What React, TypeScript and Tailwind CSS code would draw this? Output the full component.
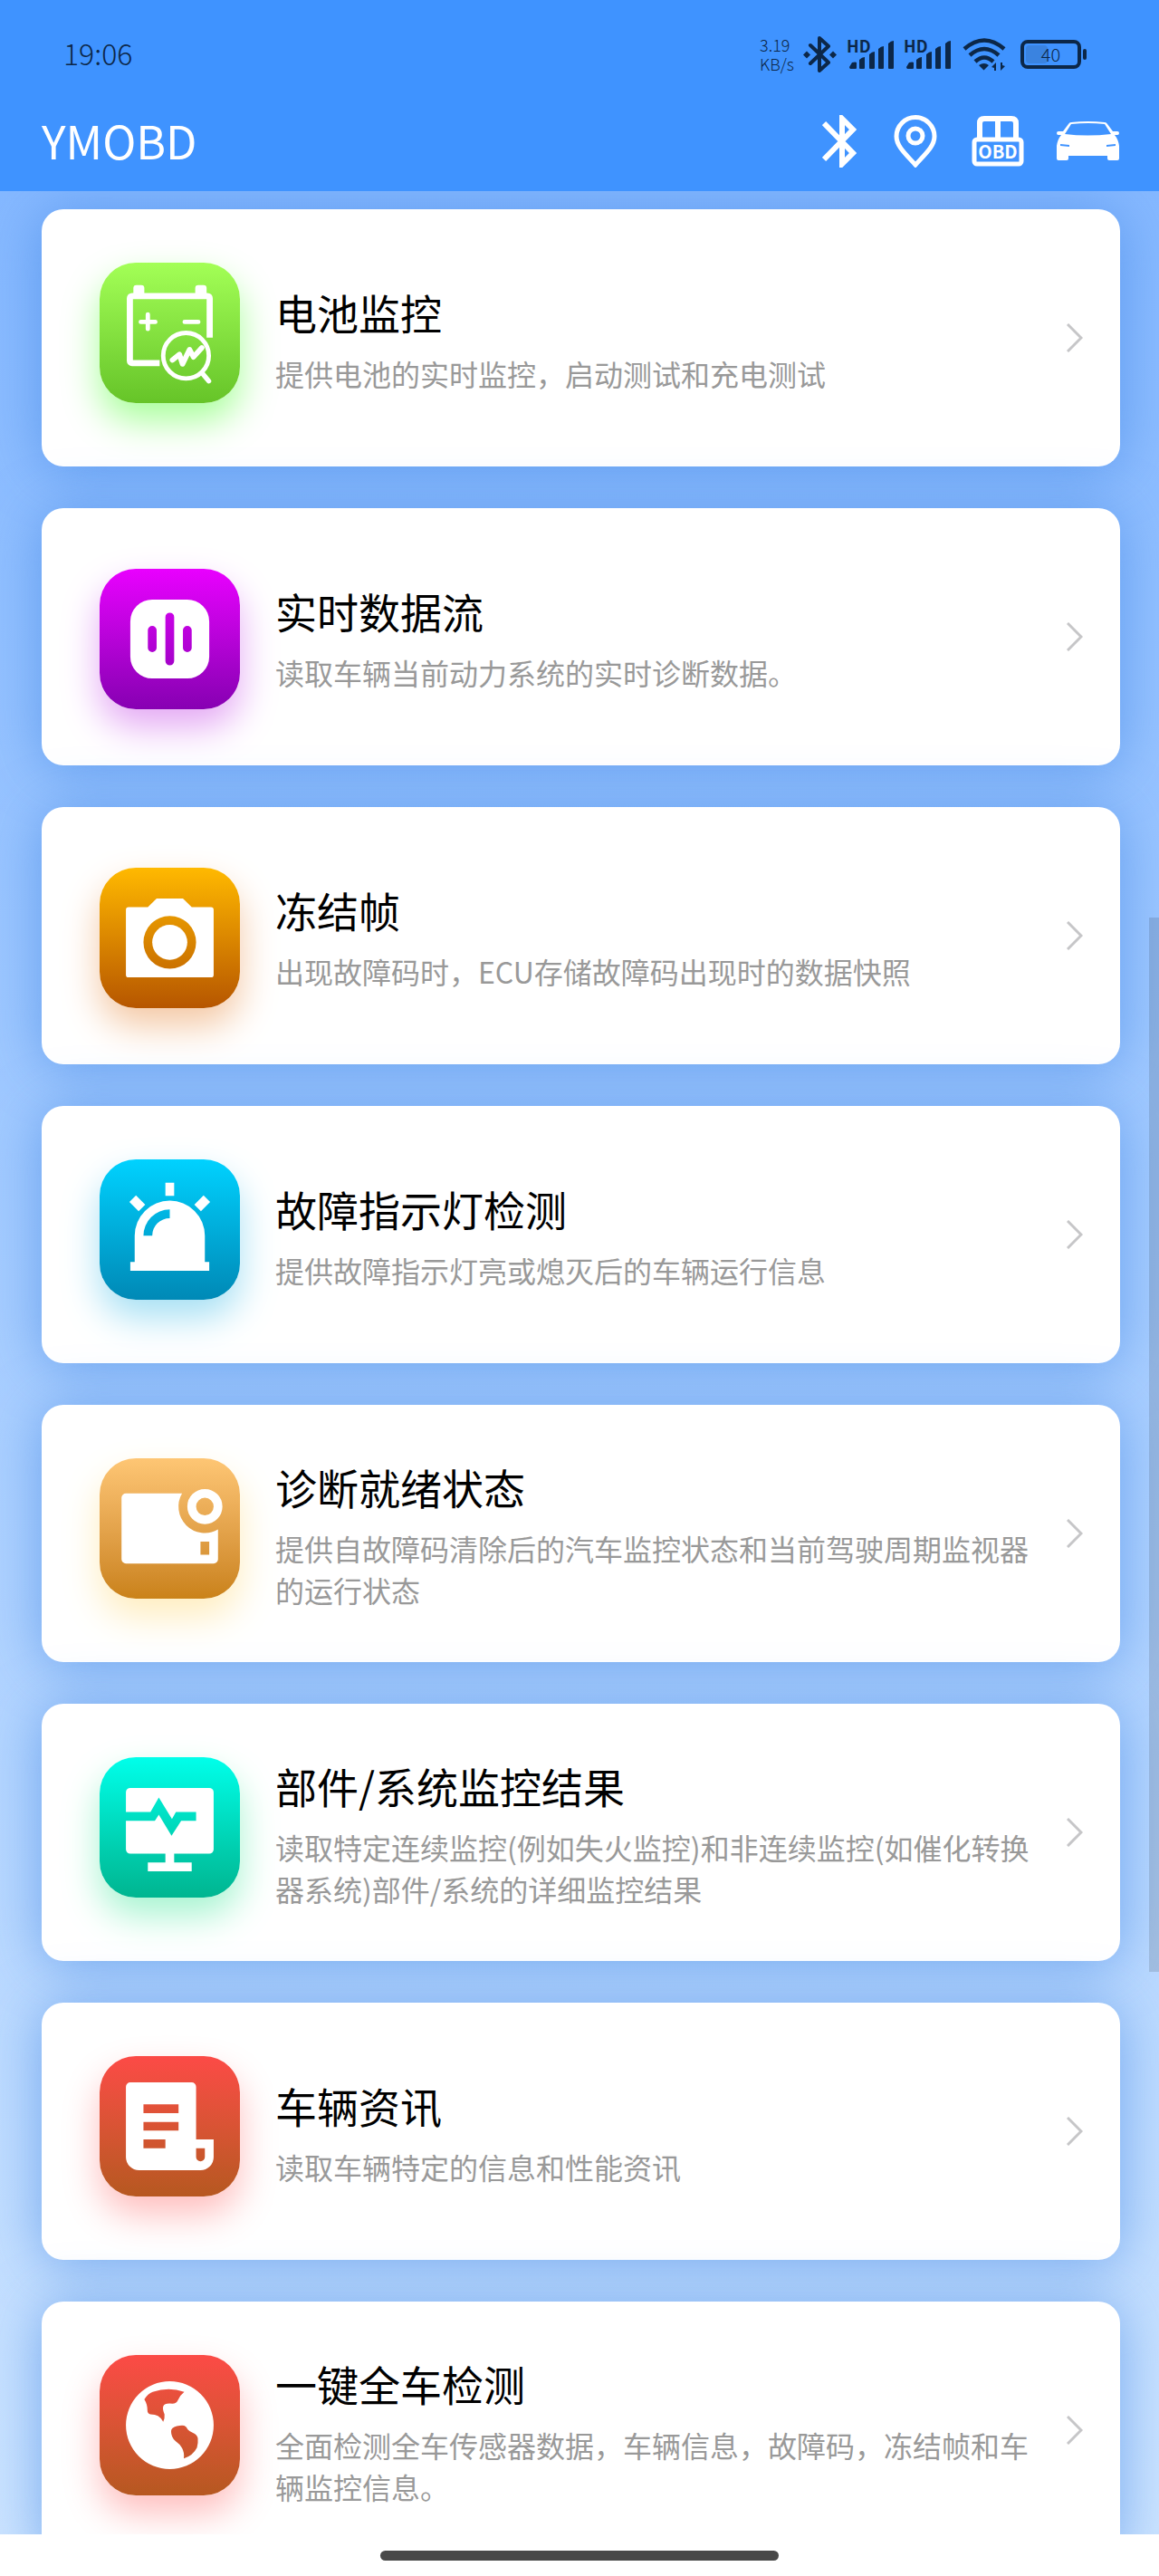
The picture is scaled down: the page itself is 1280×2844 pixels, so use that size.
import type { ReactNode } from 'react';

type Feature = {
  title: string;
  subTitle: string;
  tile: string;
  wrap: string;
  glyph: ReactNode;
};

const FEATURES: Feature[] = [
  {
    title: '电池监控',
    subTitle: '提供电池的实时监控，启动测试和充电测试',
    tile: 'from-[#a3ff56] to-[#66c428] shadow-[0_20px_40px_#a8ff9a]',
    wrap: 'pb-3',
    glyph: (
      <>
        <path
          d="M13.7 22.9H7.4a.5.5 0 0 1-.5-.5V8.1a.5.5 0 0 1 .5-.5h17.2a.5.5 0 0 1 .5.5v9"
          fill="none"
          stroke="white"
          strokeWidth="1.4"
        />
        <path d="M7.7 7.5V5.8a.7.7 0 0 1 .7-.7h1.1a.7.7 0 0 1 .7.7v1.7zM21.8 7.5V5.8a.7.7 0 0 1 .7-.7h1.2a.7.7 0 0 1 .7.7v1.7z" />
        <path d="M9.4 13.5h3.3M11 11.8v3.3M19.4 13.5h3.1" stroke="white" strokeWidth="1" strokeLinecap="round" />
        <circle cx="19.7" cy="21.2" r="5.2" fill="none" stroke="white" strokeWidth="1" />
        <path d="M23.4 25.2l1.5 1.8" stroke="white" strokeWidth="1.1" strokeLinecap="round" />
        <path
          d="M16.600 22.200l1.600-1.300.7 2.200 1.600-3.300.9 1.700 1.900-2.100"
          fill="none"
          stroke="white"
          strokeWidth="1.2"
          strokeLinecap="round"
          strokeLinejoin="round"
        />
      </>
    ),
  },
  {
    title: '实时数据流',
    subTitle: '读取车辆当前动力系统的实时诊断数据。',
    tile: 'from-[#e900ff] to-[#8700b2] shadow-[0_20px_40px_#e4a8f4]',
    wrap: 'pt-1',
    glyph: (
      <path
        fillRule="evenodd"
        d="M12 7h8a5 5 0 0 1 5 5v8a5 5 0 0 1-5 5h-8a5 5 0 0 1-5-5v-8a5 5 0 0 1 5-5zM11 14v4a1 1 0 0 0 2 0v-4a1 1 0 0 0-2 0zM15 11v10a1 1 0 0 0 2 0V11a1 1 0 0 0-2 0zM19 14v4a1 1 0 0 0 2 0v-4a1 1 0 0 0-2 0z"
      />
    ),
  },
  {
    title: '冻结帧',
    subTitle: '出现故障码时，ECU存储故障码出现时的数据快照',
    tile: 'from-[#ffb900] to-[#b65600] shadow-[0_20px_40px_#f4c8a4]',
    wrap: 'pt-1',
    glyph: (
      <>
        <path
          fillRule="evenodd"
          d="M13 7h6l2 2h4.400a.6.6 0 0 1 .6.6v14.800a.6.6 0 0 1-.6.6H6.600a.6.6 0 0 1-.6-.6V9.600a.6.6 0 0 1 .6-.6H11zM10 17a6 6 0 1 0 12 0 6 6 0 1 0-12 0z"
        />
        <circle cx="16" cy="17" r="4" />
      </>
    ),
  },
  {
    title: '故障指示灯检测',
    subTitle: '提供故障指示灯亮或熄灭后的车辆运行信息',
    tile: 'from-[#00d2ff] to-[#0089b6] shadow-[0_20px_40px_#a6e0f4]',
    wrap: 'pb-3',
    glyph: (
      <>
        <path
          fillRule="evenodd"
          d="M8 17.400a8 8 0 0 1 16 0v6h1v2H7v-2h1zM10 17.400h2a4 4 0 0 1 4-4v-2a6 6 0 0 0-6 6z"
        />
        <path d="M15 5.300h2v3h-2zM6.800 9.700l1.500-1.500 2.100 2.100-1.500 1.500zM25.200 9.700l-1.500-1.500-2.100 2.100 1.500 1.500z" />
      </>
    ),
  },
  {
    title: '诊断就绪状态',
    subTitle: '提供自故障码清除后的汽车监控状态和当前驾驶周期监视器的运行状态',
    tile: 'from-[#fec674] to-[#ca8218] shadow-[0_20px_40px_#ffedbe]',
    wrap: 'pb-3',
    glyph: (
      <>
        <path
          fillRule="evenodd"
          d="M6 8h12.800a6 6 0 0 0 8.200 8.200V23a1 1 0 0 1-1 1H6a1 1 0 0 1-1-1V9a1 1 0 0 1 1-1zM23 19v3h2v-3z"
        />
        <circle cx="24" cy="11" r="3" fill="none" stroke="white" strokeWidth="2" />
      </>
    ),
  },
  {
    title: '部件/系统监控结果',
    subTitle: '读取特定连续监控(例如失火监控)和非连续监控(如催化转换器系统)部件/系统的详细监控结果',
    tile: 'from-[#00ffea] to-[#00b590] shadow-[0_20px_40px_#a6f4d0]',
    wrap: 'pb-3',
    glyph: (
      <path
        fillRule="evenodd"
        d="M7 7h18a1 1 0 0 1 1 1v13a1 1 0 0 1-1 1h-8v2h4v2H11v-2h4v-2H7a1 1 0 0 1-1-1v-6.500h6.600l.9-1.400 2.900 4.800 2.200-3.400H22v-2h-4.600l-.9 1.600-3-4.900-1.900 3.300H6V8a1 1 0 0 1 1-1z"
      />
    ),
  },
  {
    title: '车辆资讯',
    subTitle: '读取车辆特定的信息和性能资讯',
    tile: 'from-[#fc4a46] to-[#b65820] shadow-[0_20px_40px_#ffbebe]',
    wrap: 'pb-3',
    glyph: (
      <path
        fillRule="evenodd"
        d="M7 6h14a1 1 0 0 1 1 1v12h4v4a3 3 0 0 1-3 3H9a3 3 0 0 1-3-3V7a1 1 0 0 1 1-1zM10 11v2h8v-2zM10 15v2h8v-2zM10 19v2h5v-2zM22 21v2a1 1 0 0 0 2 0v-2z"
      />
    ),
  },
  {
    title: '一键全车检测',
    subTitle: '全面检测全车传感器数据，车辆信息，故障码，冻结帧和车辆监控信息。',
    tile: 'from-[#fc4a46] to-[#b65820] shadow-[0_20px_40px_#ffbebe]',
    wrap: 'pb-3',
    glyph: (
      <path
        fillRule="evenodd"
        d="M16 6a10 10 0 1 0 0 20 10 10 0 1 0 0-20zM10.200 10.100Q11 8.800 12.100 8.400 15.800 7.200 19.300 8.400 18.300 9.200 17.900 10.200 17.500 11.100 16.600 11.100 14.800 10.900 14.500 11.700 14.300 12.300 14.800 13.500 14.900 14.400 14.500 15.200 14.100 14.400 13.300 13.900 12.700 13.500 11.600 13.500 10.900 13.400 10.900 12.600 10.900 11.200 10.200 10.100zM16.300 17.400Q16.300 16.500 17.600 16.200 18.600 16 19.300 16.100 19.800 16.300 20.100 17 20.400 17.400 21.200 17.700 22.300 18.200 22.400 19 22.500 20.200 22.200 21.100 21.300 22.900 19.200 23.600 19.400 22.300 18.800 21.200 18.300 20.300 17.300 19.600 16.300 18.800 16.300 17.400z"
      />
    ),
  },
];

const Signal = () => (
  <div className="relative h-9 w-[53px]">
    <span className="absolute top-0 left-0 text-lg leading-4 font-bold">HD</span>
    <svg viewBox="0 0 53 36" className="h-full w-full" fill="currentColor" aria-hidden="true">
      <path d="M3 32l3-5q4-1 5 0v6q0 1-1 1H4q-1-1-1-2zM14 24q3-3 6-3v12q0 1-1 1h-4q-1 0-1-1zM25 18q3-3 6-3v18q0 1-1 1h-4q-1 0-1-1zM35 12q3-3 6-3v24q0 1-1 1h-4q-1 0-1-1zM46 6q3-3 6-3v30q0 1-1 1h-4q-1 0-1-1z" />
    </svg>
  </div>
);

const StatusBar = () => (
  <div className="flex h-[120px] items-center justify-between pr-20 pl-[70px] text-[#0c2748]">
    <span className="pb-1 text-[32px] leading-10 font-light">19:06</span>
    <div className="flex items-center">
      <div className="mr-2.5 w-[38px] text-lg leading-[21px] font-light whitespace-nowrap">
        <div>3.19</div>
        <div>KB/s</div>
      </div>
      <svg viewBox="0 0 38 40" className="mr-2.5 h-10 w-[38px]" fill="none" stroke="currentColor" aria-hidden="true">
        <path
          d="M8 10l20 19-10 9V2l10 9L8 30"
          strokeWidth="4"
          strokeLinecap="round"
          strokeLinejoin="round"
        />
        <path d="M0 20.500l4-4 4 4-4 4zM29 20.500l4-4 4 4-4 4z" fill="currentColor" stroke="none" />
      </svg>
      <div className="flex gap-2.5">
        <Signal />
        <Signal />
      </div>
      <svg viewBox="0 0 48 38" className="mr-4 ml-3 h-[38px] w-12" fill="none" stroke="currentColor" aria-hidden="true">
        <path d="M2 13q22-19 44 0M8 20q16-14 32 0M14 27q10-9 20 0" strokeWidth="4.5" />
        <path d="M18 31q6-4 11 0l-5.500 5.500zM32 33l5-5v9h-2v-3zM47 32l-5 5v-9h2v3z" fill="currentColor" stroke="none" />
      </svg>
      <div className="relative flex h-8 w-[67px] items-center justify-center rounded-lg border-4 border-current">
        <span className="absolute top-0.5 left-0.5 h-5 w-6 rounded-sm bg-[#3a83e0]" />
        <span className="relative text-xl leading-5 font-light">40</span>
      </div>
      <span className="ml-0.5 h-3 w-1 rounded-full bg-current" />
    </div>
  </div>
);

const TitleBar = () => (
  <div className="flex h-[91px] items-center justify-between pr-11 pb-5 pl-[46px] text-white">
    <h1 className="pb-1 text-[50px] leading-[70px]">YMOBD</h1>
    <div className="flex items-center">
      <button type="button" aria-label="蓝牙" className="mr-10">
        <svg viewBox="0 0 39 58" className="h-[58px] w-[39px]" fill="none" stroke="currentColor" aria-hidden="true">
          <path d="M2 9l32 33-12 12V4l12 12L2 49" strokeWidth="6" />
        </svg>
      </button>
      <button type="button" aria-label="定位" className="mr-[38px]">
        <svg viewBox="0 0 48 58" className="h-[58px] w-12" fill="none" stroke="currentColor" strokeWidth="5" aria-hidden="true">
          <path d="M24 55C12 42 3 34 3 23.500a21 21 0 0 1 42 0C45 34 36 42 24 55z" />
          <circle cx="24" cy="23" r="8" />
        </svg>
      </button>
      <button type="button" aria-label="OBD" className="mr-[35px]">
        <svg viewBox="0 0 58 56" className="h-14 w-[58px]" fill="none" stroke="currentColor" aria-hidden="true">
          <path d="M9 26V8q0-5 5-5h30q5 0 5 5v18M29 3v23" strokeWidth="6" />
          <rect x="3" y="26" width="52" height="27" rx="3" strokeWidth="5" />
          <text x="29" y="47" fontSize="20" fontWeight="700" textAnchor="middle" fill="currentColor" stroke="none">
            OBD
          </text>
        </svg>
      </button>
      <button type="button" aria-label="车辆">
        <svg viewBox="0 0 70 44" className="h-11 w-[70px]" fill="currentColor" fillRule="evenodd" aria-hidden="true">
          <path d="M17 1q18-2 37 0 2 0 3 2l6 8h5q2 0 2 2t-2 2h-3q4 5 5 12v14q0 2-2 2H59q-2 0-2-2v-3H14v3q0 2-2 2H3q-2 0-2-2V27q1-7 5-12H3q-2 0-2-2t2-2h5l6-8q1-2 3-2zM17 3l-7 11q25 3 51 0L54 3q-18-2-37 0zM5 25v2l10 1v-2zM66 25v2l-10 1v-2z" />
        </svg>
      </button>
    </div>
  </div>
);

const FeatureCard = ({ title, subTitle, tile, wrap, glyph }: Feature) => (
  <button
    type="button"
    className="flex h-[284px] w-full shrink-0 items-center rounded-3xl bg-white pr-[41px] pl-16 text-left shadow-[0_4px_60px_rgba(64,132,226,0.6)]"
  >
    <div className={`shrink-0 ${wrap}`}>
      <div className={`h-[155px] w-[155px] rounded-[40px] bg-linear-to-b ${tile}`}>
        <svg viewBox="0 0 32 32" className="h-full w-full" fill="white" aria-hidden="true">
          {glyph}
        </svg>
      </div>
    </div>
    <div className="ml-[39px] min-w-0 flex-1 pb-1">
      <h2 className="mb-2 text-[46px] leading-[74px] text-black">{title}</h2>
      <p className="text-[32px] leading-[46px] text-[#999]">{subTitle}</p>
    </div>
    <svg
      viewBox="0 0 18 32"
      className="ml-9 h-8 w-[18px] shrink-0"
      fill="none"
      stroke="#c6c6c8"
      strokeWidth="3"
      aria-hidden="true"
    >
      <path d="M1 1l15 15L1 31" />
    </svg>
  </button>
);

export default function App() {
  return (
    <div className="flex h-screen flex-col bg-white font-['Noto_Sans_CJK_SC',sans-serif]">
      <header className="shrink-0 bg-[#3f93ff]">
        <StatusBar />
        <TitleBar />
      </header>
      <main className="relative min-h-0 flex-1 bg-linear-to-b from-[#85b8ff] to-[#cce4ff]">
        <div className="flex h-full flex-col gap-[46px] overflow-y-auto pt-5 pr-[43px] pb-10 pl-[46px] [scrollbar-width:none]">
          {FEATURES.map((feature) => (
            <FeatureCard key={feature.title} {...feature} />
          ))}
        </div>
        <div className="absolute top-[31%] right-0 h-[45%] w-[11px] bg-black/12" />
      </main>
      <footer className="flex h-[46px] shrink-0 items-center justify-center bg-white">
        <div className="h-[11px] w-[440px] rounded-full bg-[#484848]" />
      </footer>
    </div>
  );
}
